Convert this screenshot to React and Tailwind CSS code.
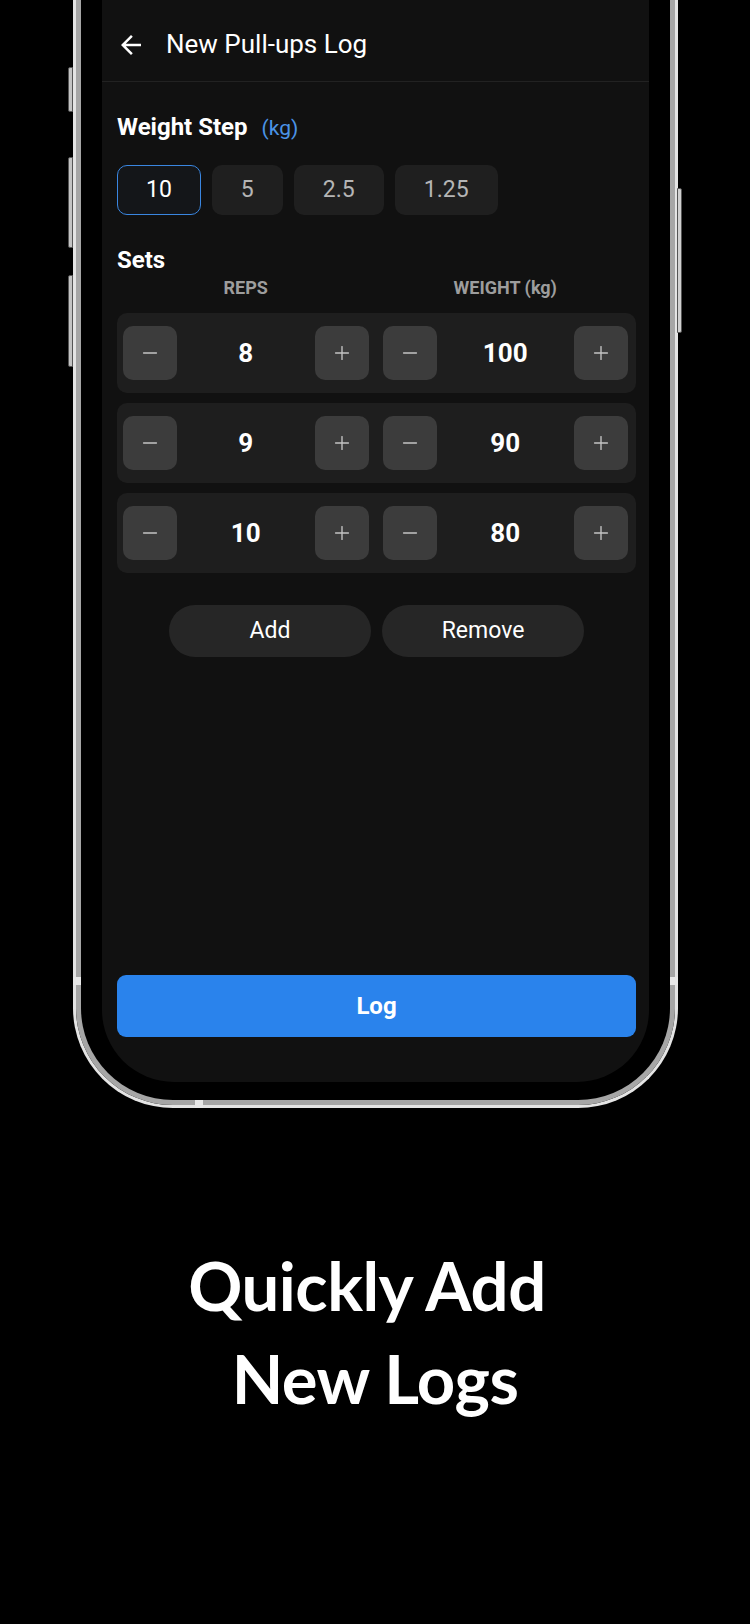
import { Minus, Plus } from 'lucide-react';

const steps = ['10', '5', '2.5', '1.25'];
const sets = [
  { reps: 8, weight: 100 },
  { reps: 9, weight: 90 },
  { reps: 10, weight: 80 },
];

const BackArrow = () => (
  <svg width="30" height="30" viewBox="0 0 24 24" fill="currentColor" className="text-white shrink-0">
    <path d="M20 11H7.83l5.59-5.59L12 4l-8 8 8 8 1.41-1.41L7.83 13H20v-2z" />
  </svg>
);

const StepBtn = ({ icon: Icon }) => (
  <button className="w-[54px] h-[54px] shrink-0 rounded-[10px] bg-[#3c3c3c] flex items-center justify-center">
    <Icon size={22} strokeWidth={1.5} className="text-[#c4c4c4]" />
  </button>
);

const Counter = ({ value }) => (
  <div className="flex items-center">
    <StepBtn icon={Minus} />
    <div className="flex-1 text-center text-[26px] font-bold text-white">{value}</div>
    <StepBtn icon={Plus} />
  </div>
);

const App = () => {
  return (
    <div className="min-h-[1624px] bg-black flex flex-col" style={{ fontFamily: 'Roboto, "Liberation Sans", sans-serif' }}>
      <div className="relative ml-[73px] w-[605px] border-x-[3px] border-b-[3px] border-[#e4e4e4] rounded-b-[100px]">
        <div className="border-x-[5px] border-b-[5px] border-[#a6a6a6] rounded-b-[97px] bg-black px-[21px] pb-[18px]">
          <div className="h-[1082px] bg-[#111111] rounded-b-[72px] flex flex-col overflow-hidden">
            <div className="h-[82px] pt-[8px] pl-[14px] flex items-center gap-[20px] border-b border-[#222222]">
              <BackArrow />
              <span className="text-[26px] text-white">New Pull-ups Log</span>
            </div>

            <div className="flex-1 flex flex-col pl-[15px] pr-[13px]">
              <div className="mt-[30px] flex items-baseline leading-[30px]">
                <span className="text-[24px] font-bold text-white">Weight Step</span>
                <span className="ml-[14px] text-[21px] text-[#4b93e6]">(kg)</span>
              </div>

              <div className="mt-[22px] flex gap-[11px]">
                {steps.map((s, i) => (
                  <button
                    key={s}
                    className={`h-[50px] px-[28px] rounded-[10px] text-[23px] border-[1.5px] ${
                      i === 0 ? 'border-[#3a86e0] bg-[#141619] text-white' : 'border-transparent bg-[#1f1f1f] text-[#b5b5b5]'
                    }`}
                  >
                    {s}
                  </button>
                ))}
              </div>

              <div className="mt-[30px] text-[24px] font-bold text-white leading-[30px]">Sets</div>

              <div className="mt-[2px] grid grid-cols-2 gap-[14px] pl-[6px] pr-[8px] text-[18px] font-bold text-[#9d9d9d] leading-[22px]">
                <div className="text-center">REPS</div>
                <div className="text-center">WEIGHT (kg)</div>
              </div>

              <div className="mt-[14px] flex flex-col gap-[10px]">
                {sets.map((s, i) => (
                  <div key={i} className="h-[80px] rounded-[10px] bg-[#1e1e1e] pl-[6px] pr-[8px] grid grid-cols-2 gap-[14px] items-center">
                    <Counter value={s.reps} />
                    <Counter value={s.weight} />
                  </div>
                ))}
              </div>

              <div className="mt-[32px] flex justify-center gap-[11px]">
                <button className="w-[202px] h-[52px] rounded-full bg-[#262626] text-[23px] text-white">Add</button>
                <button className="w-[202px] h-[52px] rounded-full bg-[#262626] text-[23px] text-white">Remove</button>
              </div>

              <button className="mt-auto mb-[45px] h-[62px] rounded-[9px] bg-[#2a83ec] text-[24px] font-bold text-white">Log</button>
            </div>
          </div>
        </div>

        {/* side buttons */}
        <div className="absolute left-[-8px] top-[67px] w-[5px] h-[45px] rounded-l-[2px] border border-[#555] bg-[#c4c4c4]" />
        <div className="absolute left-[-8px] top-[157px] w-[5px] h-[91px] rounded-l-[2px] border border-[#555] bg-[#c4c4c4]" />
        <div className="absolute left-[-8px] top-[275px] w-[5px] h-[92px] rounded-l-[2px] border border-[#555] bg-[#c4c4c4]" />
        <div className="absolute right-[-7px] top-[188px] w-[5px] h-[145px] rounded-r-[2px] border border-[#555] bg-[#d0d0d0]" />
        {/* antenna bands */}
        <div className="absolute left-[-3px] top-[977px] w-[8px] h-[8px] bg-[#e8e8e8]" />
        <div className="absolute right-[-3px] top-[977px] w-[8px] h-[8px] bg-[#e8e8e8]" />
        <div className="absolute left-[119px] bottom-[-3px] w-[8px] h-[8px] bg-[#e8e8e8]" />
      </div>

      <div
        className="mt-[131px] flex flex-col items-center text-white font-bold text-[67px] leading-[93px] tracking-[-0.5px]"
        style={{ fontFamily: 'Lato, "Open Sans", sans-serif' }}
      >
        <div className="pr-[16px]">Quickly Add</div>
        <div>New Logs</div>
      </div>
    </div>
  );
};

export default App;
